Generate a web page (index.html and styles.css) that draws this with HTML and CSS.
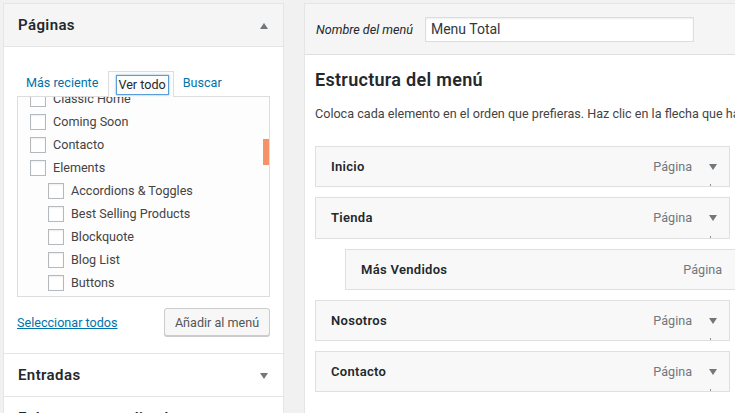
FILE: index.html
```html
<!DOCTYPE html>
<html lang="es">
<head>
<meta charset="utf-8">
<title>Menús</title>
<link rel="stylesheet" href="styles.css">
</head>
<body>
<div class="page">
  <aside class="side">
    <section class="sec">
      <div class="sec-head"><h3>Páginas</h3><span class="arrow up"></span></div>
      <div class="sec-body">
        <div class="tabs">
          <a class="tab first">Más reciente</a>
          <span class="tab active"><span class="focus">Ver todo</span></span>
          <a class="tab">Buscar</a>
        </div>
        <div class="list">
          <ul class="items">
            <li><span class="cb"></span>Classic Home</li>
            <li><span class="cb"></span>Coming Soon</li>
            <li><span class="cb"></span>Contacto</li>
            <li><span class="cb"></span>Elements</li>
            <li class="sub"><span class="cb"></span>Accordions &amp; Toggles</li>
            <li class="sub"><span class="cb"></span>Best Selling Products</li>
            <li class="sub"><span class="cb"></span>Blockquote</li>
            <li class="sub"><span class="cb"></span>Blog List</li>
            <li class="sub"><span class="cb"></span>Buttons</li>
            <li class="sub"><span class="cb"></span>Call to Action</li>
          </ul>
          <span class="thumb"></span>
        </div>
        <div class="actions">
          <a class="selall">Seleccionar todos</a>
          <button class="btn">Añadir al menú</button>
        </div>
      </div>
    </section>
    <section class="sec">
      <div class="sec-head"><h3>Entradas</h3><span class="arrow down"></span></div>
    </section>
    <section class="sec">
      <div class="sec-head"><h3>Enlaces personalizados</h3><span class="arrow down"></span></div>
    </section>
  </aside>
  <main class="main">
    <div class="main-head">
      <label class="name-label">Nombre del menú</label>
      <div class="name-input">Menu Total</div>
    </div>
    <div class="main-body">
      <h2>Estructura del menú</h2>
      <p class="desc">Coloca cada elemento en el orden que prefieras. Haz clic en la flecha que hay a la derecha del elemento para mostrar más opciones de configuración.</p>
      <ul class="menu">
        <li class="mi"><span class="mi-title">Inicio</span><span class="mi-type">Página</span><span class="toggle"></span></li>
        <li class="mi"><span class="mi-title">Tienda</span><span class="mi-type">Página</span><span class="toggle"></span></li>
        <li class="mi depth1"><span class="mi-title">Más Vendidos</span><span class="mi-type">Página</span><span class="toggle"></span></li>
        <li class="mi"><span class="mi-title">Nosotros</span><span class="mi-type">Página</span><span class="toggle"></span></li>
        <li class="mi"><span class="mi-title">Contacto</span><span class="mi-type">Página</span><span class="toggle"></span></li>
      </ul>
    </div>
  </main>
</div>
</body>
</html>
```

FILE: styles.css
```css
* { box-sizing: border-box; }
html, body { margin: 0; padding: 0; }
body {
  background: #f1f1f1;
  font-family: Roboto, "Liberation Sans", sans-serif;
  font-size: 12.6px;
  color: #444;
  overflow: hidden;
  width: 735px;
  height: 413px;
}
.page {
  display: flex;
  align-items: flex-start;
  gap: 20px;
  padding: 3px 0 0 3px;
}

/* Sidebar */
.side {
  width: 281px;
  flex: none;
  background: #fff;
  border: 1px solid #e5e5e5;
  border-bottom: none;
}
.sec { border-bottom: 1px solid #e5e5e5; }
.sec:first-child .sec-head { background: #f5f5f5; border-bottom: 1px solid #e5e5e5; }
.sec-head {
  height: 42px;
  display: flex;
  align-items: center;
  justify-content: space-between;
  padding: 0 14px 0 14px;
}
.sec:first-child .sec-head { height: 43px; }
.sec-head h3 {
  margin: 0;
  font-size: 15px;
  font-weight: 600;
  letter-spacing: .4px;
  color: #23282d;
}
.arrow {
  width: 0; height: 0;
  border-left: 4.5px solid transparent;
  border-right: 4.5px solid transparent;
  margin-right: 1px;
}
.arrow.up { border-bottom: 6px solid #72777c; margin-top: 2px; }
.arrow.down { border-top: 6px solid #72777c; margin-top: 2px; }

.sec-body { padding: 24px 13px 17px 13px; }
.tabs {
  display: flex;
  align-items: flex-end;
  height: 25px;
  position: relative;
  z-index: 1;
}
.tab {
  color: #0073aa;
  font-size: 12.6px;
  line-height: 20px;
  padding: 0 9px 3px 9px;
  text-decoration: none;
}
.tab.first { padding-left: 9px; padding-right: 10px; }
.tab.active {
  height: 26px;
  margin-bottom: -1px;
  padding: 3px 4px 0 7px;
  border: 1px solid #dddddd;
  border-bottom: none;
  background: #fdfdfd;
  color: #23282d;
}
.focus {
  display: block;
  height: 20px;
  line-height: 18px;
  padding: 0 2px 0 1px;
  border: 1px solid #5b9dd9;
  box-shadow: 0 0 2px rgba(30,140,190,.6);
  color: #23282d;
}
.list {
  position: relative;
  height: 201px;
  border: 1px solid #dddddd;
  background: #fdfdfd;
  overflow: hidden;
}
.items {
  list-style: none;
  margin: -10px 0 0 0;
  padding: 0 0 0 12px;
}
.items li {
  height: 23px;
  display: flex;
  align-items: center;
  gap: 7px;
  color: #444;
}
.items li.sub { padding-left: 18px; }
.cb {
  width: 16px; height: 16px;
  flex: none;
  border: 1px solid #b4b9be;
  background: #fff;
  box-shadow: inset 0 1px 2px rgba(0,0,0,.07);
}
.thumb {
  position: absolute;
  right: 0;
  top: 42px;
  width: 6px;
  height: 26px;
  background: #f59268;
}
.actions {
  margin-top: 11px;
  display: flex;
  align-items: center;
  justify-content: space-between;
}
.selall {
  color: #0073aa;
  text-decoration: underline;
}
.btn {
  width: 106px;
  height: 28px;
  border: 1px solid #cccccc;
  border-radius: 3px;
  background: #f7f7f7;
  box-shadow: 0 1px 0 #cccccc;
  font-family: inherit;
  font-size: 12.6px;
  color: #555;
  padding: 0;
}

/* Main */
.main {
  width: 450px;
  flex: none;
  background: #fff;
  border: 1px solid #e5e5e5;
  border-right: none;
  min-height: 420px;
}
.main-head {
  height: 51px;
  background: #f5f5f5;
  border-bottom: 1px solid #dfdfdf;
  display: flex;
  align-items: center;
  gap: 12px;
  padding: 0 0 0 11px;
}
.name-label {
  font-style: italic;
  color: #23282d;
}
.name-input {
  width: 269px;
  height: 25px;
  border: 1px solid #dddddd;
  background: #fff;
  font-size: 14px;
  line-height: 23px;
  padding: 0 5px;
  color: #32373c;
  box-shadow: inset 0 1px 2px rgba(0,0,0,.07);
}
.main-body { padding: 14px 0 0 10px; }
.main-body h2 {
  margin: 0;
  font-size: 18px;
  line-height: 22px;
  font-weight: 600;
  letter-spacing: .3px;
  color: #23282d;
}
.desc {
  margin: 13px 0 0 0;
  line-height: 20px;
  white-space: nowrap;
  color: #444;
}
.menu {
  list-style: none;
  margin: 22px 0 0 0;
  padding: 0;
  display: flex;
  flex-direction: column;
  gap: 10px;
}
.mi {
  position: relative;
  width: 415px;
  height: 41.3px;
  border: 1px solid #dfdfdf;
  background: #f8f8f8;
  display: flex;
  align-items: center;
  padding: 0 0 0 15px;
}
.mi.depth1 { margin-left: 30px; }
.mi-title {
  font-size: 13px;
  font-weight: 600;
  letter-spacing: .3px;
  color: #23282d;
  flex: 1;
}
.mi-type {
  color: #72777c;
}
.toggle {
  width: 0; height: 0;
  margin: 0 12px 0 17px;
  border-left: 4.5px solid transparent;
  border-right: 4.5px solid transparent;
  border-top: 6px solid #72777c;
}
.toggle::after {
  content: "";
  position: absolute;
  right: 18px;
  bottom: 0;
  width: 1px;
  height: 2px;
  background: #8c8f94;
}
```
